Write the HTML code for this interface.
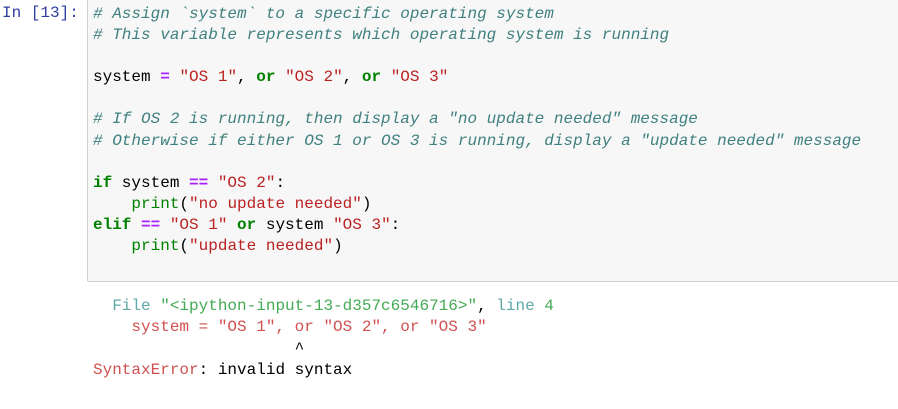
<!DOCTYPE html>
<html><head><meta charset="utf-8"><style>
body{margin:0;width:898px;height:409px;background:#fff;overflow:hidden;font-family:"Liberation Mono",monospace;font-size:16px;position:relative}
.p{position:absolute;left:2px;top:3px;color:#303f9f;line-height:21px;white-space:pre}
.box{position:absolute;left:87px;top:-5px;width:830px;height:285px;background:#f7f7f7;border:1px solid #cfcfcf;border-radius:2px}
pre{margin:0;font:inherit;line-height:21.1px;position:absolute;left:93px;top:4px;color:#000}
.c{color:#408080;font-style:italic}
.s{color:#ba2121}
.k{color:#008000;font-weight:bold}
.o{color:#aa22ff;font-weight:bold}
.g{color:#008000}
.out{top:296px;left:93px;line-height:21.3px}
.cy{color:#5fa8a8}
.r{color:#d05050}
.gr{color:#44aa55}
</style></head><body>
<div class="p">In [13]:</div>
<div class="box"></div>
<pre><span class="c"># Assign `system` to a specific operating system</span>
<span class="c"># This variable represents which operating system is running</span>

system <span class="o">=</span> <span class="s">"OS 1"</span>, <span class="k">or</span> <span class="s">"OS 2"</span>, <span class="k">or</span> <span class="s">"OS 3"</span>

<span class="c"># If OS 2 is running, then display a "no update needed" message</span>
<span class="c"># Otherwise if either OS 1 or OS 3 is running, display a "update needed" message</span>

<span class="k">if</span> system <span class="o">==</span> <span class="s">"OS 2"</span>:
    <span class="g">print</span>(<span class="s">"no update needed"</span>)
<span class="k">elif</span> <span class="o">==</span> <span class="s">"OS 1"</span> <span class="k">or</span> system <span class="s">"OS 3"</span>:
    <span class="g">print</span>(<span class="s">"update needed"</span>)</pre>
<pre class="out">  <span class="cy">File</span> <span class="gr">"&lt;ipython-input-13-d357c6546716&gt;"</span>, <span class="cy">line</span> <span class="gr">4</span>
<span class="r">    system = "OS 1", or "OS 2", or "OS 3"</span>
                     ^
<span class="r">SyntaxError</span>: invalid syntax</pre>
</body></html>
